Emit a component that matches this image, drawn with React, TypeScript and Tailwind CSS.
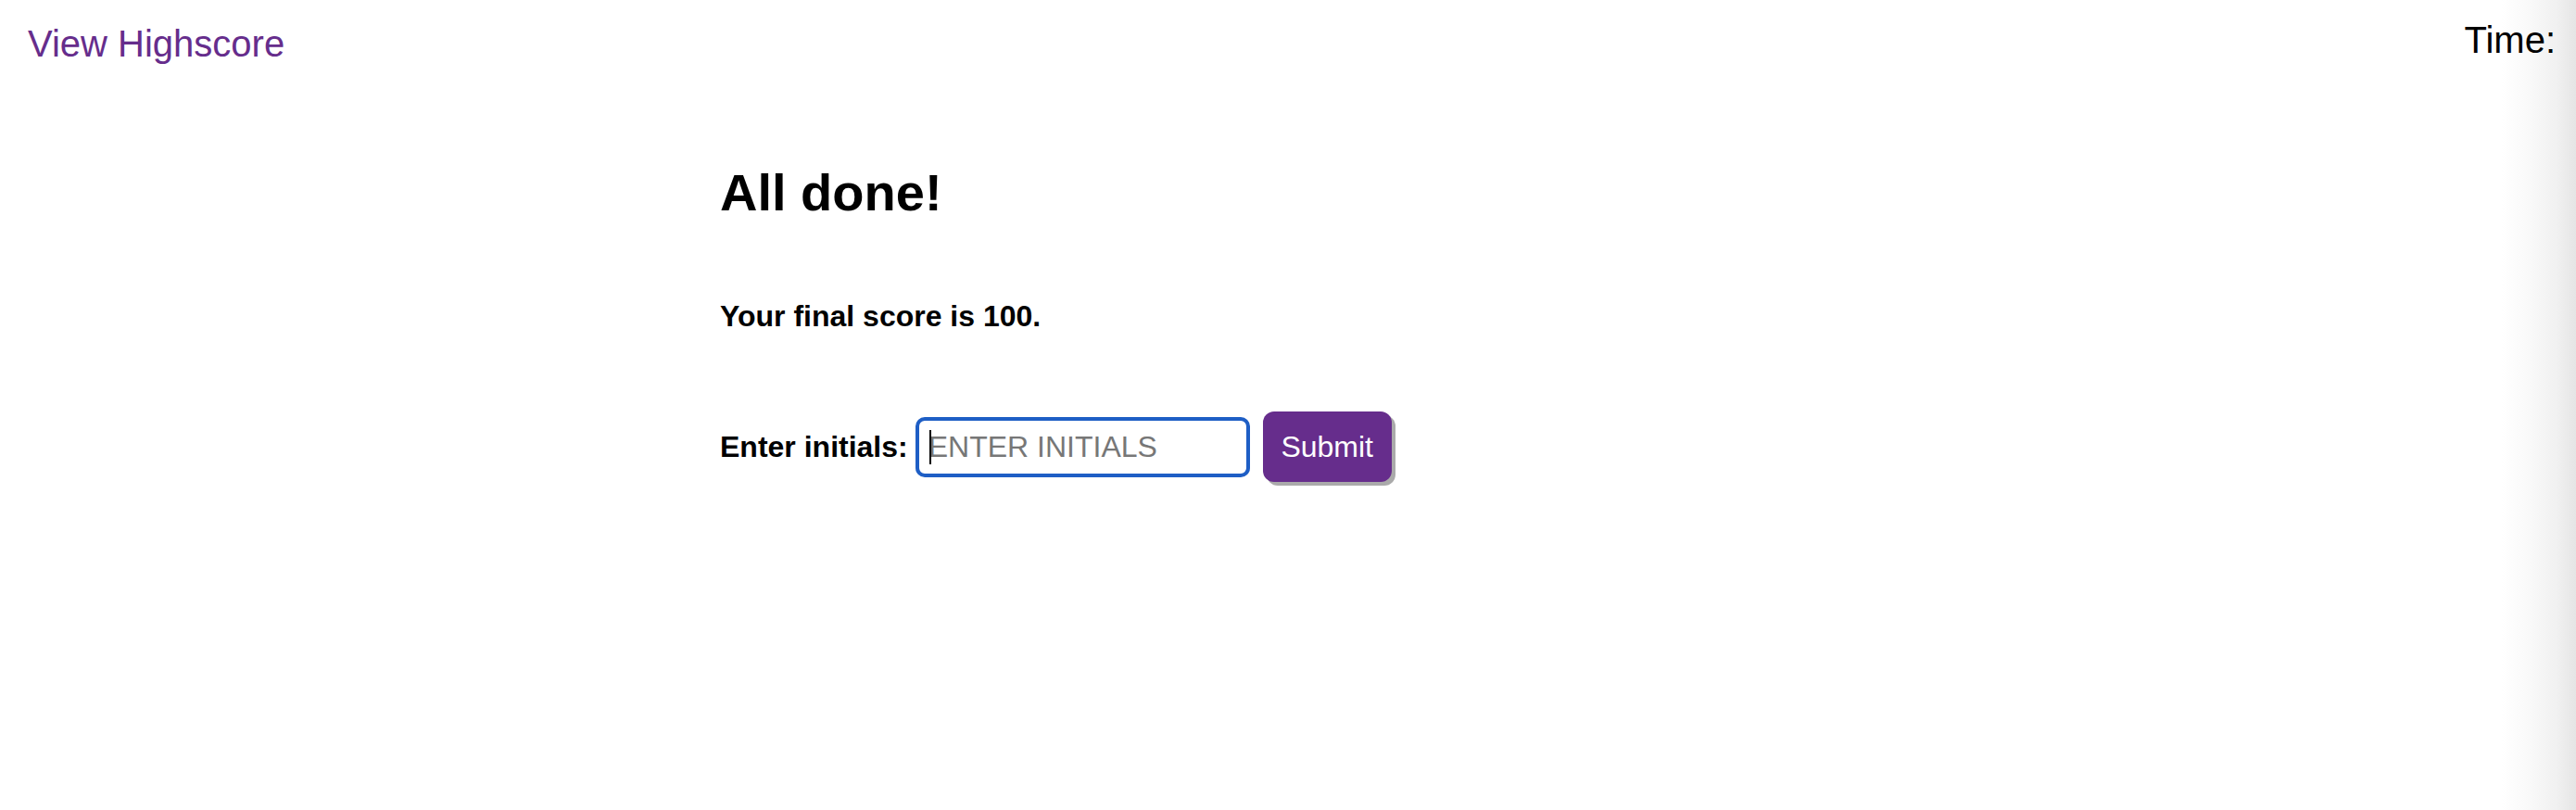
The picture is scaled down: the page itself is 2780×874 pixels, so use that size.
export default function App() {
  return (
    <div className="min-h-screen w-full text-black font-['Liberation_Sans',Arial,sans-serif] bg-[linear-gradient(to_right,#ffffff_2700px,#f9f9f9_2730px,#f0f0f0_2760px,#e5e5e5_2780px)]">
      {/* Header */}
      <header className="flex items-start justify-between pl-[30px] pr-[22px]">
        <a href="#" className="mt-[23px] text-[40px] leading-[48px] text-[#662d8c] no-underline">
          View Highscore
        </a>
        <div className="mt-[19px] text-[40px] leading-[48px]">Time: </div>
      </header>

      {/* End of quiz */}
      <main className="pl-[777px]">
        <h1 className="mt-[105px] text-[56px] leading-[64px] font-bold">All done!</h1>
        <p className="mt-[83px] text-[32px] leading-[36px] font-bold">Your final score is 100.</p>
        <form className="mt-[85px] flex items-center" onSubmit={(e) => e.preventDefault()}>
          <label htmlFor="initials" className="text-[32px] leading-[36px] font-bold">
            Enter initials:
          </label>
          <div className="relative ml-[8px]">
            <input
              id="initials"
              type="text"
              placeholder="ENTER INITIALS"
              className="block w-[361px] h-[65px] border-4 border-[#1e5ec5] rounded-[10px] pl-[10px] text-[32px] outline-none caret-transparent bg-white placeholder:text-[#777777]"
            />
            <span className="absolute left-[15px] top-[14px] w-[2px] h-[37px] bg-black" />
          </div>
          <button
            type="submit"
            className="ml-[14px] w-[139px] h-[76px] rounded-[12px] bg-[#662d8c] text-white text-[32px] leading-[36px] shadow-[4px_4px_0_#aaaaaa]"
          >
            Submit
          </button>
        </form>
      </main>
    </div>
  )
}
